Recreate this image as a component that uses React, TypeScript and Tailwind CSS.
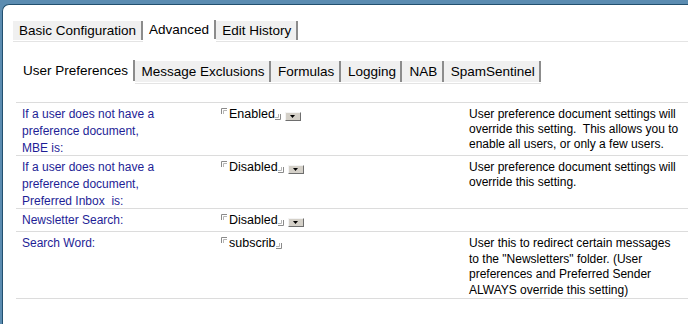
import React from "react";

const font = { fontFamily: '"Liberation Sans", Arial, sans-serif' };

function MarkTL() {
  return (
    <svg width="6" height="6" viewBox="0 0 6 6" className="mt-[1px] shrink-0">
      <path d="M0.5 6 V0.5 H6" stroke="#8a8a8a" strokeWidth="1" fill="none" />
      <path d="M2.5 6 V2.5 H6" stroke="#b5b5b5" strokeWidth="1" fill="none" />
    </svg>
  );
}

function MarkBR() {
  return (
    <svg width="6" height="6" viewBox="0 0 6 6" className="mt-[7px] shrink-0">
      <path d="M5.5 0 V5.5 H0" stroke="#8a8a8a" strokeWidth="1" fill="none" />
      <path d="M3.5 0 V3.5 H0" stroke="#b5b5b5" strokeWidth="1" fill="none" />
    </svg>
  );
}

function DropBtn() {
  return (
    <div className="mt-[5px] ml-[4px] w-[16px] h-[9px] bg-[#d4d0c8] border-t border-l border-t-[#f4f4f4] border-l-[#f4f4f4] border-b border-r border-b-[#6e6e6e] border-r-[#6e6e6e] flex items-center justify-center">
      <svg width="5" height="3" viewBox="0 0 5 3">
        <path d="M0 0 H5 L2.5 3 Z" fill="#000" />
      </svg>
    </div>
  );
}

function Value({ text, drop }: { text: string; drop?: boolean }) {
  return (
    <div className="flex items-start pt-[4px] pl-[1px]">
      <MarkTL />
      <span className="ml-[2px] leading-[15px] text-[12.5px] text-black">{text}</span>
      <MarkBR />
      {drop && <DropBtn />}
    </div>
  );
}

function Tab({ label, active, h }: { label: string; active?: boolean; h: "a" | "b" }) {
  const inner =
    h === "a"
      ? "h-[19px] leading-[19px] pl-[6px] pr-[5px] border-r-2 border-r-[#8c8c8c]"
      : "h-[21px] leading-[21px] pl-[7px] pr-[4.5px] border-r-2 border-r-[#8c8c8c]";
  if (active) {
    return (
      <div className={h === "a" ? "h-[21px]" : "h-[23px]"}>
        <div className={`${inner} bg-white text-black -mt-[1px]`}>{label}</div>
      </div>
    );
  }
  return (
    <div className="border-b border-b-[#e4e4e4] pb-[1px] bg-white">
      <div className={`${inner} bg-[#f0f0f0] text-black`}>{label}</div>
    </div>
  );
}

const labelCls = "pl-[6px] pt-[3px] leading-[17px] text-[#1e1e96]";
const descCls = "pt-[4px] leading-[15px] text-black whitespace-nowrap";

export default function App() {
  return (
    <div
      className="w-[688px] h-[324px] bg-[#5b8cb1] pt-[4px] pl-[2px] overflow-hidden"
      style={font}
    >
      <div className="h-full bg-white border-t border-l border-[#22506f] rounded-tl-[7px]">
        {/* Top tabs */}
        <div className="flex items-end pl-[10px] pt-[16px] text-[13.5px]">
          <Tab label="Basic Configuration" h="a" />
          <Tab label="Advanced" h="a" active />
          <Tab label="Edit History" h="a" />
          <div className="flex-1 border-b border-b-[#e4e4e4]" />
        </div>

        <div className="pl-[13px]">
          {/* Sub tabs */}
          <div className="flex items-end mt-[19px] text-[13.5px]">
            <Tab label="User Preferences" h="b" active />
            <Tab label="Message Exclusions" h="b" />
            <Tab label="Formulas" h="b" />
            <Tab label="Logging" h="b" />
            <Tab label="NAB" h="b" />
            <Tab label="SpamSentinel" h="b" />
          </div>

          {/* Table */}
          <div className="mt-[18px] text-[12px] border-b border-b-[#dcdcdc]">
            <div className="grid grid-cols-[204px_249px_1fr] h-[53px] border-t border-t-[#dcdcdc]">
              <div className={labelCls}>
                If a user does not have a<br />
                preference document,<br />
                MBE is:
              </div>
              <Value text="Enabled" drop />
              <div className={descCls}>
                User preference document settings will<br />
                override this setting.&nbsp; This allows you to<br />
                enable all users, or only a few users.
              </div>
            </div>
            <div className="grid grid-cols-[204px_249px_1fr] h-[53px] border-t border-t-[#dcdcdc]">
              <div className={labelCls}>
                If a user does not have a<br />
                preference document,<br />
                Preferred Inbox&nbsp; is:
              </div>
              <Value text="Disabled" drop />
              <div className={descCls}>
                User preference document settings will<br />
                override this setting.
              </div>
            </div>
            <div className="grid grid-cols-[204px_249px_1fr] h-[23px] border-t border-t-[#dcdcdc]">
              <div className={labelCls}>Newsletter Search:</div>
              <Value text="Disabled" drop />
              <div />
            </div>
            <div className="grid grid-cols-[204px_249px_1fr] h-[67px] border-t border-t-[#dcdcdc]">
              <div className={labelCls}>Search Word:</div>
              <Value text="subscrib" />
              <div className="pt-[4px] leading-[15.6px] text-black whitespace-nowrap">
                User this to redirect certain messages<br />
                to the "Newsletters" folder. (User<br />
                preferences and Preferred Sender<br />
                ALWAYS override this setting)
              </div>
            </div>
          </div>
        </div>
      </div>
    </div>
  );
}
